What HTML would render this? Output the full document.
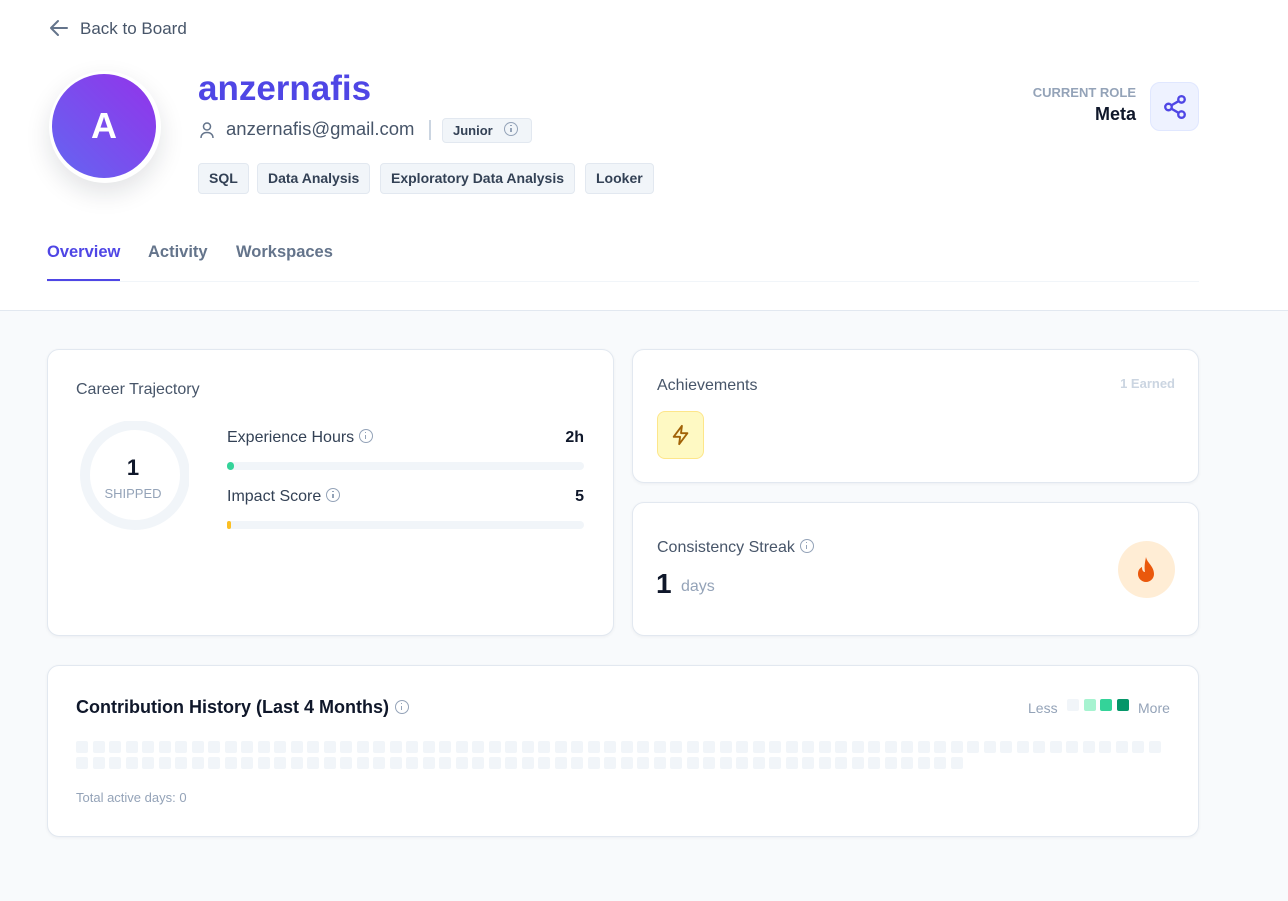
<!DOCTYPE html>
<html><head><meta charset="utf-8"><style>
*{box-sizing:border-box;margin:0;padding:0}
body{width:1288px;height:901px;background:#f8fafc;font-family:"Liberation Sans",sans-serif;position:relative;overflow:hidden;color:#0f172a}
.top{position:absolute;left:0;top:0;width:1288px;height:311px;background:#fff;border-bottom:1px solid #e2e8f0}
.abs{position:absolute}
.tag{position:absolute;top:163px;height:31px;background:#f1f5f9;border:1px solid #e2e8f0;border-radius:4px;font-size:14px;font-weight:bold;color:#334155;line-height:29px;padding:0 10px}
.card{position:absolute;background:#fff;border:1px solid #e2e8f0;border-radius:12px;box-shadow:0 1px 3px rgba(15,23,42,.05)}
.lbl{font-size:16px;color:#475569}
.info{display:inline-block;width:14px;height:14px;border:1.3px solid #94a3b8;border-radius:50%;position:relative;vertical-align:-1px;margin-left:5px}
.info:after{content:"";position:absolute;left:5px;top:5px;width:1.3px;height:4px;background:#94a3b8}
.info:before{content:"";position:absolute;left:5px;top:2px;width:1.3px;height:1.3px;background:#94a3b8}
.sq{position:absolute;width:12px;height:12px;border-radius:2px;background:#f1f5f9}
</style></head><body>
<div class="top"></div>
<svg class="abs" style="left:49px;top:19px" width="20" height="18" viewBox="0 0 20 18"><path d="M18 9H2M9 2L2 9l7 7" stroke="#64748b" stroke-width="2" fill="none" stroke-linecap="round" stroke-linejoin="round"/></svg>
<div class="abs" style="left:80px;top:19px;font-size:17px;color:#475569">Back to Board</div>

<div class="abs" style="left:49px;top:71px;width:112px;height:112px;border-radius:50%;background:#fff;box-shadow:0 10px 25px rgba(15,23,42,.12)"></div>
<div class="abs" style="left:52px;top:74px;width:104px;height:104px;border-radius:50%;background:linear-gradient(45deg,#6366f1,#9333ea);color:#fff;font-size:36px;font-weight:bold;text-align:center;line-height:104px">A</div>

<div class="abs" style="left:198px;top:69px;font-size:35px;font-weight:bold;color:#4f46e5">anzernafis</div>
<svg class="abs" style="left:199px;top:121px" width="16" height="18" viewBox="0 0 16 18"><circle cx="8" cy="5.5" r="3.5" stroke="#64748b" stroke-width="1.5" fill="none"/><path d="M2 17c0-3.5 2.5-5.5 6-5.5s6 2 6 5.5" stroke="#64748b" stroke-width="1.5" fill="none"/></svg>
<div class="abs" style="left:226px;top:118px;font-size:18.5px;color:#475569">anzernafis@gmail.com</div>
<div class="abs" style="left:429px;top:120px;width:2px;height:20px;background:#cbd5e1"></div>
<div class="abs" style="left:442px;top:118px;height:25px;width:90px;background:#f1f5f9;border:1px solid #e2e8f0;border-radius:4px;font-size:13px;font-weight:bold;color:#334155;line-height:23px;padding-left:10px">Junior <span class="info" style="margin-left:8px"></span></div>

<div class="tag" style="left:198px">SQL</div>
<div class="tag" style="left:257px">Data Analysis</div>
<div class="tag" style="left:380px">Exploratory Data Analysis</div>
<div class="tag" style="left:585px">Looker</div>

<div class="abs" style="left:1000px;top:85px;width:136px;text-align:right;font-size:13px;font-weight:bold;color:#94a3b8">CURRENT ROLE</div>
<div class="abs" style="left:1000px;top:104px;width:136px;text-align:right;font-size:18px;font-weight:bold;color:#0f172a">Meta</div>
<div class="abs" style="left:1150px;top:82px;width:49px;height:49px;border-radius:10px;background:#eef2ff;border:1px solid #e0e7ff"></div>
<svg class="abs" style="left:1162px;top:94px" width="26" height="26" viewBox="0 0 24 24" fill="none" stroke="#4f46e5" stroke-width="2.2"><circle cx="18" cy="5" r="3"/><circle cx="6" cy="12" r="3"/><circle cx="18" cy="19" r="3"/><path d="M8.6 13.5l6.8 4M15.4 6.5l-6.8 4"/></svg>

<div class="abs" style="left:47px;top:243px;font-size:16.5px;font-weight:bold;color:#4f46e5">Overview</div>
<div class="abs" style="left:148px;top:243px;font-size:16.5px;font-weight:bold;color:#64748b">Activity</div>
<div class="abs" style="left:236px;top:243px;font-size:16.5px;font-weight:bold;color:#64748b">Workspaces</div>
<div class="abs" style="left:47px;top:281px;width:1152px;height:1px;background:#f1f5f9"></div>
<div class="abs" style="left:47px;top:279px;width:73px;height:2px;background:#4f46e5"></div>

<div class="card" style="left:47px;top:349px;width:567px;height:287px"></div>
<div class="abs lbl" style="left:76px;top:381px">Career Trajectory</div>
<div class="abs" style="left:76px;top:421px;width:113px;height:112px;overflow:hidden">
<svg width="130" height="130" style="position:absolute;left:0;top:0"><circle cx="59" cy="54" r="50" stroke="#f1f5f9" stroke-width="10" fill="none"/></svg>
</div>
<div class="abs" style="left:103px;top:455px;width:60px;text-align:center;font-size:22px;font-weight:bold">1</div>
<div class="abs" style="left:93px;top:486px;width:80px;text-align:center;font-size:13px;color:#94a3b8">SHIPPED</div>
<div class="abs lbl" style="left:227px;top:429px;color:#334155">Experience Hours<span class="info"></span></div>
<div class="abs" style="left:540px;top:429px;width:44px;text-align:right;font-size:16px;font-weight:bold">2h</div>
<div class="abs" style="left:227px;top:462px;width:357px;height:8px;border-radius:4px;background:#f1f5f9"><div style="width:7px;height:8px;border-radius:4px;background:#34d399"></div></div>
<div class="abs lbl" style="left:227px;top:488px;color:#334155">Impact Score<span class="info"></span></div>
<div class="abs" style="left:540px;top:488px;width:44px;text-align:right;font-size:16px;font-weight:bold">5</div>
<div class="abs" style="left:227px;top:521px;width:357px;height:8px;border-radius:4px;background:#f1f5f9"><div style="width:4px;height:8px;border-radius:4px;background:#fbbf24"></div></div>

<div class="card" style="left:632px;top:349px;width:567px;height:134px"></div>
<div class="abs lbl" style="left:657px;top:377px">Achievements</div>
<div class="abs" style="left:1080px;top:376px;width:95px;text-align:right;font-size:13px;font-weight:bold;color:#cbd5e1">1 Earned</div>
<div class="abs" style="left:657px;top:411px;width:47px;height:48px;border-radius:8px;background:#fef9c3;border:1px solid #fde68a"></div>
<svg class="abs" style="left:670px;top:424px" width="22" height="22" viewBox="0 0 24 24" fill="none" stroke="#a16207" stroke-width="2" stroke-linejoin="round"><path d="M13 2L4 14h7l-1 8 9-12h-7z"/></svg>

<div class="card" style="left:632px;top:502px;width:567px;height:134px"></div>
<div class="abs lbl" style="left:657px;top:539px">Consistency Streak<span class="info"></span></div>
<div class="abs" style="left:656px;top:568px;font-size:28px;font-weight:bold">1</div>
<div class="abs" style="left:681px;top:578px;font-size:16px;color:#94a3b8">days</div>
<div class="abs" style="left:1118px;top:541px;width:57px;height:57px;border-radius:50%;background:#ffedd5"></div>
<svg class="abs" style="left:1133px;top:555px" width="26" height="30" viewBox="0 0 26 30"><path d="M13 2C14 8 21 11 21 19a8 8 0 0 1-16 0c0-4 2-6 4-7 0 3 1 5 3 5-1-5 0-10 1-15z" fill="#ea580c"/></svg>

<div class="card" style="left:47px;top:665px;width:1152px;height:172px"></div>
<div class="abs" style="left:76px;top:697px;font-size:18px;font-weight:bold">Contribution History (Last 4 Months)<span class="info" style="margin-left:6px"></span></div>
<div class="abs" style="left:1028px;top:700px;font-size:14px;color:#94a3b8">Less</div>
<div class="sq" style="left:1067px;top:699px"></div>
<div class="sq" style="left:1084px;top:699px;background:#a7f3d0"></div>
<div class="sq" style="left:1100px;top:699px;background:#34d399"></div>
<div class="sq" style="left:1117px;top:699px;background:#059669"></div>
<div class="abs" style="left:1138px;top:700px;font-size:14px;color:#94a3b8">More</div>
<div id="g"></div>
<div class="abs" style="left:76px;top:790px;font-size:13px;color:#94a3b8">Total active days: 0</div>
<script>
var h='';for(var i=0;i<120;i++){var r=i<66?0:1,c=i<66?i:i-66;h+='<div class="sq" style="left:'+(76+c*16.5)+'px;top:'+(741+r*16)+'px"></div>';}document.getElementById('g').innerHTML=h;
</script>
</body></html>
